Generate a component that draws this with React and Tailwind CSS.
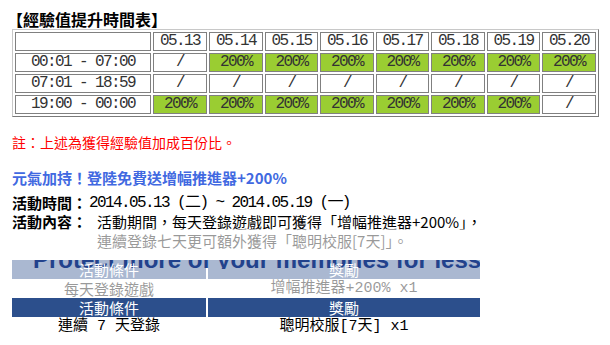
import React from 'react';

const mono = "font-['Liberation_Mono','Noto_Sans_CJK_TC',monospace]";
const sans = "font-['Noto_Sans_CJK_TC','Noto_Sans',sans-serif]";

const DATES = ['05.13', '05.14', '05.15', '05.16', '05.17', '05.18', '05.19', '05.20'];
const WIDTHS = ['w-[54px]', 'w-[54px]', 'w-[53px]', 'w-[54px]', 'w-[53px]', 'w-[54px]', 'w-[53px]', 'w-[54px]'];

// 1 = 200% bonus, 0 = none
const ROWS = [
  { time: '00:01 - 07:00', cells: [0, 1, 1, 1, 1, 1, 1, 1] },
  { time: '07:01 - 18:59', cells: [0, 0, 0, 0, 0, 0, 0, 0] },
  { time: '19:00 - 00:00', cells: [1, 1, 1, 1, 1, 1, 1, 0] },
];

const cellBase = 'h-[19px] p-0 text-center border border-[#808080] leading-[17px]';

const ExpTable = () => (
  <table
    className={`ml-[12px] w-[587px] table-fixed border-separate border-spacing-[2px] border border-t-[#c8c8c8] border-l-[#c8c8c8] border-r-[#7a7a7a] border-b-[#7a7a7a] ${mono} text-[16px] tracking-[-1.6px] text-[#333]`}
  >
    <tbody>
      <tr>
        <td className={`${cellBase} w-[136px]`}></td>
        {DATES.map((d, i) => (
          <td key={d} className={`${cellBase} ${WIDTHS[i]}`}>{d}</td>
        ))}
      </tr>
      {ROWS.map((row) => (
        <tr key={row.time}>
          <td className={cellBase}>{row.time}</td>
          {row.cells.map((on, i) => (
            <td key={i} className={`${cellBase} ${on ? 'bg-[#9acd32]' : 'bg-white'}`}>
              {on ? '200%' : '/'}
            </td>
          ))}
        </tr>
      ))}
    </tbody>
  </table>
);

const RewardTable = () => (
  <div className={`ml-[12px] mt-[10px] grid w-[468px] grid-cols-[194px_272px] gap-x-[2px] ${sans} text-[15px] leading-[19px]`}>
    <div className="h-[19px] bg-[#2c4f8c] text-center text-white">
      <span className="relative z-30">活動條件</span>
    </div>
    <div className="h-[19px] bg-[#2c4f8c] text-center text-white">
      <span className="relative z-30">獎勵</span>
    </div>
    <div className="h-[19px] text-center text-black">每天登錄遊戲</div>
    <div className={`h-[19px] text-center text-black ${mono}`}>增幅推進器+200% x1</div>
    <div className="h-[19px] bg-[#2c4f8c] text-center text-white">活動條件</div>
    <div className="h-[19px] bg-[#2c4f8c] text-center text-white">獎勵</div>
    <div className={`h-[19px] text-center text-black ${mono}`}>連續 7 天登錄</div>
    <div className={`h-[19px] text-center text-black ${mono}`}>聰明校服[7天] x1</div>
  </div>
);

export default function App() {
  return (
    <div className="relative h-[345px] w-[610px] overflow-hidden bg-white pt-[9px]">
      <div className={`ml-[7px] h-[20px] ${sans} text-[16px] font-bold leading-[20px] text-black`}>
        【經驗值提升時間表】
      </div>

      <ExpTable />

      <div className={`ml-[12px] mt-[15px] ${sans} text-[14px] leading-[20px] text-[#ff0000]`}>
        註：上述為獲得經驗值加成百份比。
      </div>

      <div className={`ml-[12px] mt-[16px] ${sans} text-[15px] font-bold leading-[20px] text-[#4169e1]`}>
        元氣加持！登陸免費送增幅推進器+200%
      </div>

      <div className="ml-[12px] mt-[6px] flex h-[18px] items-center leading-[18px] text-black">
        <span className={`${sans} text-[15px] font-bold`}>活動時間：</span>
        <span className={`ml-[2px] ${mono} text-[16px] tracking-[-1.6px]`}>2014.05.13 (二) ~ 2014.05.19 (一)</span>
      </div>

      <div className={`ml-[12px] flex ${sans} text-[15px] leading-[19px] text-black`}>
        <span className="font-bold">活動內容：</span>
        <div className="pl-[10px]">
          <div>活動期間，每天登錄遊戲即可獲得「增幅推進器+200%」，</div>
          <div>連續登錄七天更可額外獲得「聰明校服[7天]」。</div>
        </div>
      </div>

      <RewardTable />

      {/* photobucket style watermark over the page */}
      <div className="absolute left-0 top-[229px] z-10 h-[68px] w-[610px] bg-white/60"></div>
      <div className="absolute left-0 top-[260px] z-20 h-[9px] w-[480px] overflow-hidden">
        <div className="absolute left-[33px] top-[-12px] whitespace-nowrap font-['Liberation_Sans',Arial,sans-serif] text-[24px] font-bold leading-[24px] text-[#22428c]">
          Protect more of your memories for less
        </div>
      </div>
    </div>
  );
}
